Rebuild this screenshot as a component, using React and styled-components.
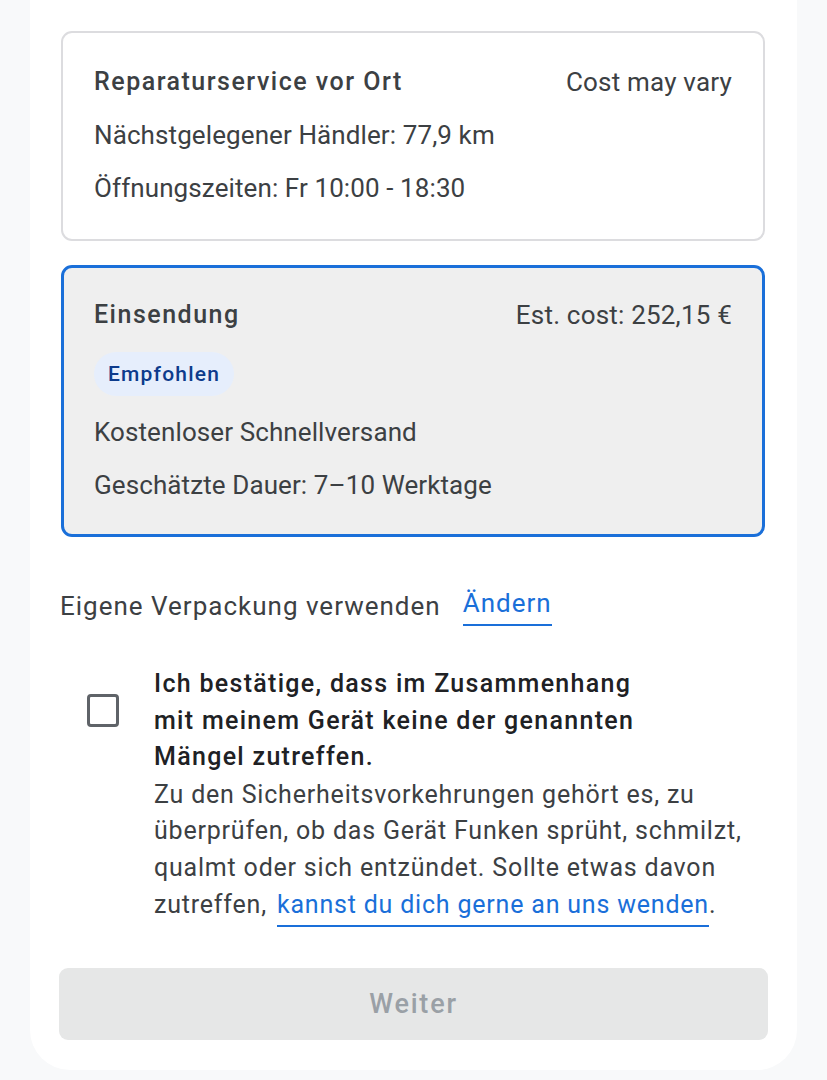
import React from "react";
import styled, { createGlobalStyle } from "styled-components";

const GlobalStyle = createGlobalStyle`
  html, body {
    margin: 0;
    padding: 0;
    background: #f8f9fa;
  }
  body {
    font-family: Roboto, "Noto Sans", sans-serif;
    -webkit-font-smoothing: antialiased;
  }
`;

const Sheet = styled.div`
  margin: 0 30px;
  background: #fff;
  border-radius: 0 0 40px 40px;
  padding: 31px 32px 29px 31px;
  box-sizing: border-box;
  min-height: 1070px;
  display: flex;
  flex-direction: column;
`;

const OptionCard = styled.div`
  border: ${({ selected }) => (selected ? "3px solid #1a6fd9" : "2px solid #dcdcdf")};
  background: ${({ selected }) => (selected ? "#efefef" : "#fff")};
  border-radius: 11px;
  padding: ${({ selected }) => (selected ? "30px 30px 32px" : "32px 31px 34px")};
  margin-bottom: 24px;
  display: flex;
  flex-direction: column;
  gap: 19px;
  color: #3c4043;
`;

const HeadRow = styled.div`
  display: flex;
  justify-content: space-between;
  align-items: center;
`;

const Title = styled.div`
  font-size: 25px;
  font-weight: 500;
  line-height: 34px;
  letter-spacing: 1.5px;
`;

const Price = styled.div`
  font-size: 26px;
  line-height: 34px;
  letter-spacing: 0.2px;
  color: #3c4043;
`;

const Line = styled.div`
  font-size: 26px;
  line-height: 34px;
  letter-spacing: 0.1px;
`;

const Chip = styled.span`
  align-self: flex-start;
  background: #e6eefc;
  color: #0d3b8c;
  font-size: 21px;
  font-weight: 500;
  letter-spacing: 1.2px;
  height: 44px;
  line-height: 44px;
  padding: 0 14px;
  border-radius: 22px;
  margin-top: 1px;
`;

const PackRow = styled.div`
  display: flex;
  align-items: center;
  gap: 22px;
  margin-top: 25px;
  font-size: 26px;
  letter-spacing: 1px;
  line-height: 34px;
  color: #3c4043;
  margin-left: -1px;
`;

const LinkText = styled.a`
  color: #1a6fd9;
  text-decoration: none;
  border-bottom: 2px solid #1a6fd9;
  padding-bottom: 4px;
  cursor: pointer;
`;

const Confirm = styled.div`
  display: flex;
  align-items: flex-start;
  margin-top: 40px;
`;

const Box = styled.span`
  flex: none;
  width: 26px;
  height: 27px;
  border: 3px solid #5f6368;
  border-radius: 4px;
  margin: 28px 35px 0 26px;
`;

const ConfirmText = styled.div`
  font-size: 25px;
  line-height: 36.6px;
  letter-spacing: 0.8px;
  color: #202124;
`;

const Strong = styled.div`
  font-weight: 500;
  letter-spacing: 1.3px;
  margin-bottom: 1px;
`;

const Fine = styled.div`
  color: #3c4043;
`;

const InlineLink = styled.a`
  color: #1a6fd9;
  text-decoration: none;
  border-bottom: 2px solid #1a6fd9;
  padding-bottom: 6px;
  margin-left: 10px;
  cursor: pointer;
`;

const NextButton = styled.button`
  margin-top: 45px;
  margin-left: -2px;
  margin-right: -3px;
  height: 72px;
  border: none;
  border-radius: 9px;
  background: #e6e7e7;
  color: #9aa0a6;
  font-family: inherit;
  font-size: 27px;
  font-weight: 500;
  letter-spacing: 1.8px;
  cursor: default;
`;

export default function App() {
  return (
    <>
      <GlobalStyle />
      <Sheet>
        <OptionCard>
          <HeadRow>
            <Title>Reparaturservice vor Ort</Title>
            <Price>Cost may vary</Price>
          </HeadRow>
          <Line>Nächstgelegener Händler: 77,9 km</Line>
          <Line>Öffnungszeiten: Fr 10:00 - 18:30</Line>
        </OptionCard>

        <OptionCard selected>
          <HeadRow>
            <Title>Einsendung</Title>
            <Price>Est. cost: 252,15 €</Price>
          </HeadRow>
          <Chip>Empfohlen</Chip>
          <Line>Kostenloser Schnellversand</Line>
          <Line>Geschätzte Dauer: 7–10 Werktage</Line>
        </OptionCard>

        <PackRow>
          <span>Eigene Verpackung verwenden</span>
          <LinkText>Ändern</LinkText>
        </PackRow>

        <Confirm>
          <Box />
          <ConfirmText>
            <Strong>
              Ich bestätige, dass im Zusammenhang
              <br />
              mit meinem Gerät keine der genannten
              <br />
              Mängel zutreffen.
            </Strong>
            <Fine>
              Zu den Sicherheitsvorkehrungen gehört es, zu
              <br />
              überprüfen, ob das Gerät Funken sprüht, schmilzt,
              <br />
              qualmt oder sich entzündet. Sollte etwas davon
              <br />
              zutreffen,
              <InlineLink>kannst du dich gerne an uns wenden</InlineLink>.
            </Fine>
          </ConfirmText>
        </Confirm>

        <NextButton disabled>Weiter</NextButton>
      </Sheet>
    </>
  );
}
